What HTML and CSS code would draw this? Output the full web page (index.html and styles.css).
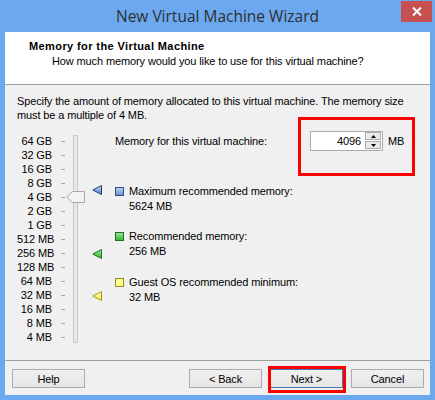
FILE: index.html
```html
<!DOCTYPE html>
<html>
<head>
<meta charset="utf-8">
<link rel="stylesheet" href="styles.css">
</head>
<body>
<div class="window">
  <div class="titlebar">
    <span class="title">New Virtual Machine Wizard</span>
    <span class="close"><svg width="10" height="9" viewBox="0 0 10 9"><path d="M1 0.5 L9 8.5 M9 0.5 L1 8.5" stroke="#fff" stroke-width="2"/></svg></span>
  </div>
  <div class="client">
    <div class="header">
      <div class="h-title">Memory for the Virtual Machine</div>
      <div class="h-sub">How much memory would you like to use for this virtual machine?</div>
    </div>
    <div class="body">
      <p class="intro">Specify the amount of memory allocated to this virtual machine. The memory size<br>must be a multiple of 4 MB.</p>
      <div class="main">
        <div class="scale">
          <ul class="ticks">
            <li><span class="lbl">64 GB</span><span class="tick"></span></li>
            <li><span class="lbl">32 GB</span><span class="tick"></span></li>
            <li><span class="lbl">16 GB</span><span class="tick"></span></li>
            <li><span class="lbl">8 GB</span><span class="tick"></span></li>
            <li><span class="lbl">4 GB</span><span class="tick"></span></li>
            <li><span class="lbl">2 GB</span><span class="tick"></span></li>
            <li><span class="lbl">1 GB</span><span class="tick"></span></li>
            <li><span class="lbl">512 MB</span><span class="tick"></span></li>
            <li><span class="lbl">256 MB</span><span class="tick"></span></li>
            <li><span class="lbl">128 MB</span><span class="tick"></span></li>
            <li><span class="lbl">64 MB</span><span class="tick"></span></li>
            <li><span class="lbl">32 MB</span><span class="tick"></span></li>
            <li><span class="lbl">16 MB</span><span class="tick"></span></li>
            <li><span class="lbl">8 MB</span><span class="tick"></span></li>
            <li><span class="lbl">4 MB</span><span class="tick"></span></li>
          </ul>
          <div class="track"></div>
          <svg class="thumb" style="top:60px" width="19" height="12" viewBox="0 0 19 12"><polygon points="0.5,6 6.5,0.5 18.5,0.5 18.5,11.5 6.5,11.5" fill="#f3f3f3" stroke="#a9a9a9"/></svg>
          <svg class="marker" style="top:54px" width="10" height="10" viewBox="0 0 10 10"><defs><linearGradient id="gb" x1="0" y1="0" x2="0" y2="1"><stop offset="0" stop-color="#c6d9f5"/><stop offset="1" stop-color="#4f7fc6"/></linearGradient></defs><polygon points="0.8,5 9.5,0.5 9.5,9.5" fill="url(#gb)" stroke="#1e3d74"/></svg>
          <svg class="marker" style="top:118px" width="10" height="10" viewBox="0 0 10 10"><defs><linearGradient id="gg" x1="0" y1="0" x2="0" y2="1"><stop offset="0" stop-color="#9be89b"/><stop offset="1" stop-color="#2fb02f"/></linearGradient></defs><polygon points="0.8,5 9.5,0.5 9.5,9.5" fill="url(#gg)" stroke="#1b7a1b"/></svg>
          <svg class="marker" style="top:160px" width="10" height="10" viewBox="0 0 10 10"><defs><linearGradient id="gy" x1="0" y1="0" x2="0" y2="1"><stop offset="0" stop-color="#ffffc0"/><stop offset="1" stop-color="#f2f240"/></linearGradient></defs><polygon points="0.8,5 9.5,0.5 9.5,9.5" fill="url(#gy)" stroke="#9a9a1e"/></svg>
        </div>
        <div class="details">
          <div class="mem-row">
            <span class="mem-label">Memory for this virtual machine:</span>
            <span class="spin-group">
              <span class="spin">
                <span class="spin-val">4096</span>
                <span class="spin-btns">
                  <span class="sbtn"><svg width="5" height="3" viewBox="0 0 5 3"><polygon points="2.5,0 5,3 0,3" fill="#000"/></svg></span>
                  <span class="sbtn"><svg width="5" height="3" viewBox="0 0 5 3"><polygon points="0,0 5,0 2.5,3" fill="#000"/></svg></span>
                </span>
              </span>
              <span class="unit">MB</span>
            </span>
          </div>
          <div class="legend l1">
            <span class="swatch sw-blue"></span>
            <div class="ltext"><div>Maximum recommended memory:</div><div class="lval">5624 MB</div></div>
          </div>
          <div class="legend l2">
            <span class="swatch sw-green"></span>
            <div class="ltext"><div>Recommended memory:</div><div class="lval">256 MB</div></div>
          </div>
          <div class="legend l3">
            <span class="swatch sw-yellow"></span>
            <div class="ltext"><div>Guest OS recommended minimum:</div><div class="lval">32 MB</div></div>
          </div>
        </div>
      </div>
    </div>
    <div class="footer">
      <span class="btn">Help</span>
      <span class="spacer"></span>
      <span class="btn">&lt; Back</span>
      <span class="btn btn-default">Next &gt;</span>
      <span class="btn">Cancel</span>
    </div>
  </div>
</div>
</body>
</html>
```

FILE: styles.css
```css
* { box-sizing: border-box; }
html, body { margin: 0; padding: 0; }
body {
  width: 435px;
  height: 400px;
  overflow: hidden;
  font-family: "Liberation Sans", Arial, sans-serif;
  font-size: 11px;
  letter-spacing: -0.12px;
  color: #000;
}
.window {
  width: 435px;
  height: 400px;
  background: #6ba8ef;
  display: flex;
  flex-direction: column;
}
.titlebar {
  position: relative;
  height: 32px;
  flex: none;
  display: flex;
  align-items: center;
  justify-content: center;
}
.title {
  font-family: "Open Sans", "Noto Sans", sans-serif;
  font-size: 15.5px;
  letter-spacing: 0;
  color: #2f2f2f;
  margin-top: -1px;
}
.close {
  position: absolute;
  top: 1px;
  right: 3px;
  width: 31px;
  height: 21px;
  background: #c75050;
  display: flex;
  align-items: center;
  justify-content: center;
}
.client {
  flex: 1;
  margin: 0 5px 5px 5px;
  background: #f0f0f0;
  display: flex;
  flex-direction: column;
}
.header {
  height: 53px;
  flex: none;
  background: #fff;
  border-bottom: 1px solid #a0a0a0;
  padding: 7px 0 0 24px;
  line-height: 14px;
}
.h-title { font-weight: bold; letter-spacing: 0.4px; }
.h-sub { margin: 1px 0 0 23px; }
.body {
  flex: 1;
  padding: 9px 0 0 12px;
}
.intro {
  margin: 0;
  line-height: 14px;
}
.main {
  margin-top: 9px;
  display: flex;
}
.scale {
  position: relative;
  width: 98px;
  height: 213px;
  padding-top: 3px;
}
.ticks {
  list-style: none;
  margin: 0;
  padding: 0;
}
.ticks li {
  height: 14px;
  display: flex;
  align-items: center;
}
.lbl {
  width: 35px;
  text-align: right;
  white-space: nowrap;
}
.tick {
  width: 4px;
  height: 1px;
  margin-left: 9px;
  background: #a6a6a6;
}
.track {
  position: absolute;
  left: 56px;
  top: 4px;
  width: 5px;
  height: 208px;
  background: #e7e7e7;
  border: 1px solid #c8c8c8;
}
.thumb {
  position: absolute;
  left: 49px;
  display: block;
}
.marker {
  position: absolute;
  left: 75px;
  display: block;
}
.details {
  flex: 1;
  line-height: 14px;
}
.mem-row {
  height: 20px;
  display: flex;
  align-items: center;
}
.mem-label { width: 195px; }
.spin-group {
  position: relative;
  display: flex;
  align-items: center;
}
.spin-group::after {
  content: "";
  position: absolute;
  left: -12px;
  top: -14px;
  width: 111px;
  height: 53px;
  border: 3px solid #f00;
}
.spin {
  width: 73px;
  height: 20px;
  border: 1px solid #acacac;
  background: #fff;
  display: flex;
}
.spin-val {
  flex: 1;
  text-align: right;
  padding-right: 4px;
  line-height: 18px;
}
.spin-btns {
  width: 17px;
  display: flex;
  flex-direction: column;
  gap: 1px;
  padding: 0 1px 1px 0;
}
.sbtn {
  flex: 1;
  border: 1px solid #adadad;
  background: #e9e9e9;
  display: flex;
  align-items: center;
  justify-content: center;
}
.sbtn svg { display: block; }
.unit { margin-left: 5px; }
.legend {
  display: flex;
}
.l1 { margin-top: 33px; }
.l2 { margin-top: 16px; }
.l3 { margin-top: 17px; }
.swatch {
  width: 9px;
  height: 9px;
  margin: 3px 5px 0 0;
  flex: none;
}
.sw-blue { background: linear-gradient(#b4cdf0, #6e96d2); border: 1px solid #33507e; }
.sw-green { background: linear-gradient(#8fe08f, #3cb83c); border: 1px solid #1f6e1f; }
.sw-yellow { background: #ffff8c; border: 1px solid #8c8c28; }
.lval { margin-top: 1px; }
.footer {
  flex: none;
  border-top: 1px solid #a0a0a0;
  padding: 8px 6px 7px 7px;
  display: flex;
  gap: 8px;
}
.spacer { flex: 1; }
.btn {
  position: relative;
  width: 73px;
  height: 19px;
  border: 1px solid #acacac;
  background: linear-gradient(#f0f0f0, #e5e5e5);
  display: flex;
  align-items: center;
  justify-content: center;
}
.btn-default { border-color: #3c7fb1; }
.btn-default::after {
  content: "";
  position: absolute;
  left: -3px;
  top: -4px;
  right: -4px;
  bottom: -6px;
  border: 3px solid #f00;
}
```
